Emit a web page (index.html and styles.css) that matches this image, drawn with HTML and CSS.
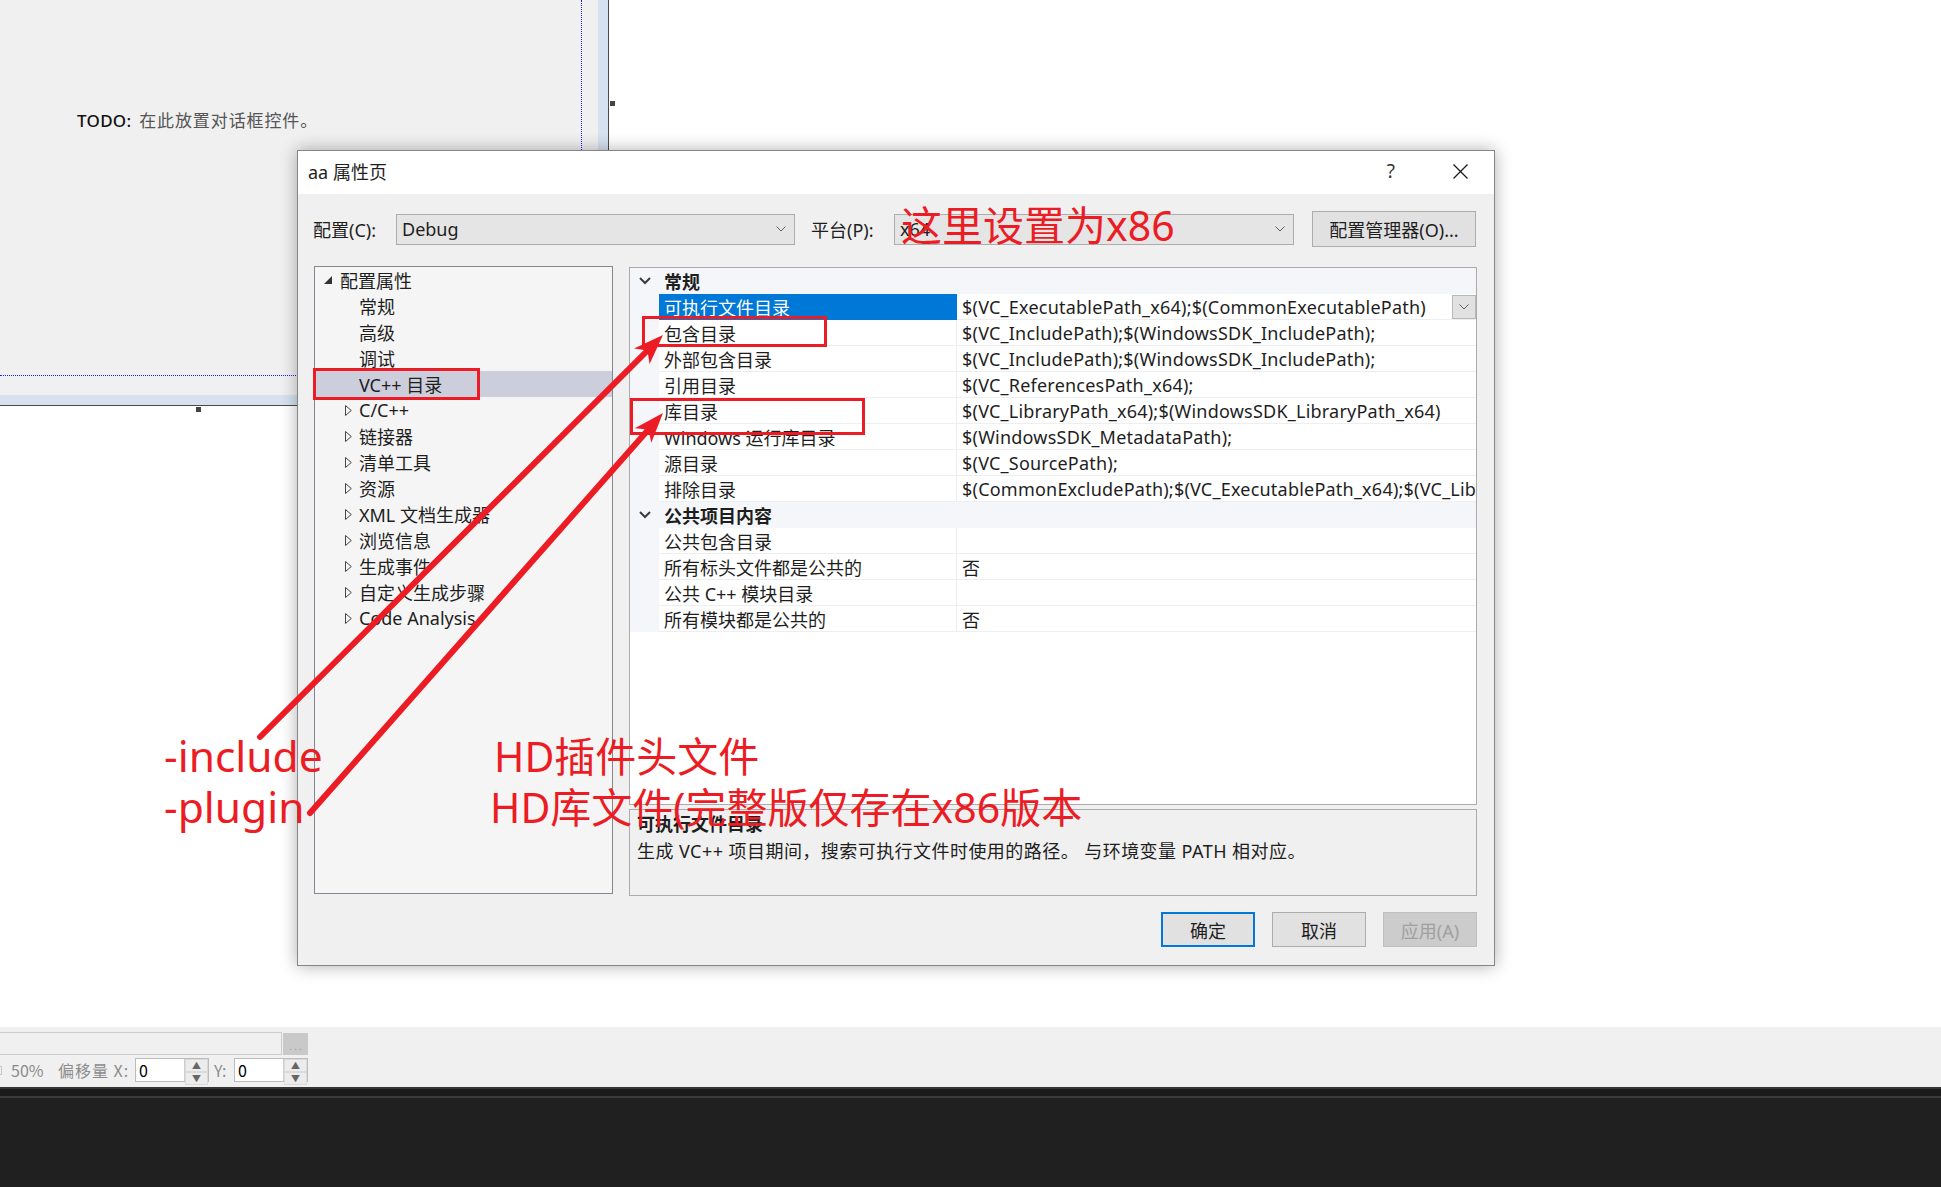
FILE: index.html
```html
<!DOCTYPE html>
<html lang="zh-CN">
<head>
    <meta charset="UTF-8">
    <title>aa 属性页</title>
    <link rel="stylesheet" href="styles.css">
</head>
<body>
  <div class="workspace">
    <div class="surface">
      <div class="form-area">
        <div class="margin-box">
          <p class="todo"><b>TODO:</b> 在此放置对话框控件。</p>
        </div>
      </div>
      <div class="band"></div>
      <div class="band"></div>
      <div class="band"></div>
    </div>
    <span class="handle handle-right"></span>
    <span class="handle handle-bottom"></span>

    <div class="dialog">
      <div class="titlebar">
        <span class="title">aa 属性页</span>
        <span class="help">?</span>
        <svg class="close" width="15" height="15" viewBox="0 0 15 15"><path d="M0.5 0.5 L14.5 14.5 M14.5 0.5 L0.5 14.5" stroke="#1a1a1a" stroke-width="1.3" fill="none"/></svg>
      </div>

      <div class="dlg-body">
        <div class="config-row">
          <span class="lbl">配置(C):</span>
          <div class="combo"><span>Debug</span><svg width="10" height="6" viewBox="0 0 10 6"><path d="M0.5 0.5 L5 5 L9.5 0.5" stroke="#606060" fill="none"/></svg></div>
          <span class="lbl lbl2">平台(P):</span>
          <div class="combo combo-wide"><span>x64</span><svg width="10" height="6" viewBox="0 0 10 6"><path d="M0.5 0.5 L5 5 L9.5 0.5" stroke="#606060" fill="none"/></svg></div>
          <button class="btn btn-manager">配置管理器(O)...</button>
        </div>

        <div class="main">
          <ul class="tree">
            <li class="root"><svg class="tw" width="8" height="8" viewBox="0 0 8 8"><path d="M8 0 L8 8 L0 8 Z" fill="#333"/></svg>配置属性</li>
            <li class="node">常规</li>
            <li class="node">高级</li>
            <li class="node">调试</li>
            <li class="node selected">VC++ 目录</li>
            <li class="node kids"><svg class="tw" width="7" height="11" viewBox="0 0 7 11"><path d="M0.5 0.5 L6.3 5.5 L0.5 10.5 Z" fill="none" stroke="#444"/></svg>C/C++</li>
            <li class="node kids"><svg class="tw" width="7" height="11" viewBox="0 0 7 11"><path d="M0.5 0.5 L6.3 5.5 L0.5 10.5 Z" fill="none" stroke="#444"/></svg>链接器</li>
            <li class="node kids"><svg class="tw" width="7" height="11" viewBox="0 0 7 11"><path d="M0.5 0.5 L6.3 5.5 L0.5 10.5 Z" fill="none" stroke="#444"/></svg>清单工具</li>
            <li class="node kids"><svg class="tw" width="7" height="11" viewBox="0 0 7 11"><path d="M0.5 0.5 L6.3 5.5 L0.5 10.5 Z" fill="none" stroke="#444"/></svg>资源</li>
            <li class="node kids"><svg class="tw" width="7" height="11" viewBox="0 0 7 11"><path d="M0.5 0.5 L6.3 5.5 L0.5 10.5 Z" fill="none" stroke="#444"/></svg>XML 文档生成器</li>
            <li class="node kids"><svg class="tw" width="7" height="11" viewBox="0 0 7 11"><path d="M0.5 0.5 L6.3 5.5 L0.5 10.5 Z" fill="none" stroke="#444"/></svg>浏览信息</li>
            <li class="node kids"><svg class="tw" width="7" height="11" viewBox="0 0 7 11"><path d="M0.5 0.5 L6.3 5.5 L0.5 10.5 Z" fill="none" stroke="#444"/></svg>生成事件</li>
            <li class="node kids"><svg class="tw" width="7" height="11" viewBox="0 0 7 11"><path d="M0.5 0.5 L6.3 5.5 L0.5 10.5 Z" fill="none" stroke="#444"/></svg>自定义生成步骤</li>
            <li class="node kids"><svg class="tw" width="7" height="11" viewBox="0 0 7 11"><path d="M0.5 0.5 L6.3 5.5 L0.5 10.5 Z" fill="none" stroke="#444"/></svg>Code Analysis</li>
          </ul>

          <div class="right-col">
            <div class="grid">
              <div class="row">
                <div class="gut"><svg width="12" height="8" viewBox="0 0 12 8"><path d="M1 1 L6 6 L11 1" stroke="#3c3c3c" stroke-width="2" fill="none"/></svg></div>
                <div class="cat">常规</div>
              </div>
              <div class="row sel">
                <div class="gut"></div>
                <div class="name">可执行文件目录</div>
                <div class="val"><span>$(VC_ExecutablePath_x64);$(CommonExecutablePath)</span>
                  <span class="drop"><svg width="10" height="6" viewBox="0 0 10 6"><path d="M0.5 0.5 L5 5 L9.5 0.5" stroke="#606060" fill="none"/></svg></span></div>
              </div>
              <div class="row"><div class="gut"></div><div class="name">包含目录</div><div class="val">$(VC_IncludePath);$(WindowsSDK_IncludePath);</div></div>
              <div class="row"><div class="gut"></div><div class="name">外部包含目录</div><div class="val">$(VC_IncludePath);$(WindowsSDK_IncludePath);</div></div>
              <div class="row"><div class="gut"></div><div class="name">引用目录</div><div class="val">$(VC_ReferencesPath_x64);</div></div>
              <div class="row"><div class="gut"></div><div class="name">库目录</div><div class="val">$(VC_LibraryPath_x64);$(WindowsSDK_LibraryPath_x64)</div></div>
              <div class="row"><div class="gut"></div><div class="name">Windows 运行库目录</div><div class="val">$(WindowsSDK_MetadataPath);</div></div>
              <div class="row"><div class="gut"></div><div class="name">源目录</div><div class="val">$(VC_SourcePath);</div></div>
              <div class="row"><div class="gut"></div><div class="name">排除目录</div><div class="val">$(CommonExcludePath);$(VC_ExecutablePath_x64);$(VC_LibraryPath_x64)</div></div>
              <div class="row">
                <div class="gut"><svg width="12" height="8" viewBox="0 0 12 8"><path d="M1 1 L6 6 L11 1" stroke="#3c3c3c" stroke-width="2" fill="none"/></svg></div>
                <div class="cat">公共项目内容</div>
              </div>
              <div class="row"><div class="gut"></div><div class="name">公共包含目录</div><div class="val"></div></div>
              <div class="row"><div class="gut"></div><div class="name">所有标头文件都是公共的</div><div class="val">否</div></div>
              <div class="row"><div class="gut"></div><div class="name">公共 C++ 模块目录</div><div class="val"></div></div>
              <div class="row"><div class="gut"></div><div class="name">所有模块都是公共的</div><div class="val">否</div></div>
            </div>
            <div class="desc">
              <div class="desc-title">可执行文件目录</div>
              <div class="desc-text">生成 VC++ 项目期间，搜索可执行文件时使用的路径。 与环境变量 PATH 相对应。</div>
            </div>
          </div>
        </div>

        <div class="actions">
          <button class="btn btn-primary">确定</button>
          <button class="btn">取消</button>
          <button class="btn btn-disabled">应用(A)</button>
        </div>
      </div>
    </div>
  </div>

  <div class="statusbar">
    <div class="sb-row">
      <div class="sb-field"></div>
      <div class="sb-more">. . .</div>
    </div>
    <div class="sb-row sb-row2">
      <span class="sb-check"></span>
      <span class="sb-zoom">50%</span>
      <span class="sb-offset">偏移量 X:</span>
      <div class="spin"><span class="spin-val">0</span><span class="spin-btns"><i>▲</i><i>▼</i></span></div>
      <span class="sb-y">Y:</span>
      <div class="spin"><span class="spin-val">0</span><span class="spin-btns"><i>▲</i><i>▼</i></span></div>
    </div>
  </div>
  <div class="dock"><div class="dock-tab"></div></div>

  <svg class="marks" viewBox="0 0 1941 1187">
    <rect class="mark-box" x="314.5" y="369.5" width="164" height="29"/>
    <rect class="mark-box" x="643.5" y="317.5" width="182" height="28"/>
    <rect class="mark-box" x="631.5" y="399.5" width="232" height="34"/>
    <path class="mark-line" d="M260 737 L647 351"/>
    <path class="mark-head" d="M663 335 L649.6 364 L647.4 350.5 L634 348.4 Z"/>
    <path class="mark-line" d="M310 813 L648 430"/>
    <path class="mark-head" d="M663 413 L651.3 442.8 L648.4 429.5 L634.8 428.2 Z"/>
    <text class="mark-text" x="901" y="241">这里设置为x86</text>
    <text class="mark-text mark-latin" x="164" y="772">-include</text>
    <text class="mark-text mark-latin" x="164" y="823">-plugin</text>
    <text class="mark-text" x="494" y="772">HD插件头文件</text>
    <text class="mark-text" x="490" y="823">HD库文件(完整版仅存在x86版本</text>
  </svg>
</body>
</html>
```

FILE: styles.css
```css
* {
  box-sizing: border-box;
}

body {
  margin: 0;
  width: 1941px;
  height: 1187px;
  overflow: hidden;
  position: relative;
  display: flex;
  flex-direction: column;
  background: #fff;
  color: #1e1e1e;
  font-family: "Noto Sans", "Noto Sans CJK SC", sans-serif;
  font-size: 18px;
}

/* editor canvas behind the dialog */
.workspace {
  position: relative;
  flex: none;
  height: 1027px;
  background: #fff;
}

.surface {
  display: grid;
  grid-template-columns: 598px 10px;
  grid-template-rows: 395px 10px;
  width: 609px;
  height: 406px;
  border-right: 1px solid #4a4a4a;
  border-bottom: 1px solid #4a4a4a;
  background: #f0f0f0;
}

.margin-box {
  width: 582px;
  height: 376px;
  border-right: 1px dotted #1c1cff;
  border-bottom: 1px dotted #1c1cff;
  padding: 108px 0 0 77px;
}

.todo {
  margin: 0;
  font-family: "Noto Sans CJK SC", sans-serif;
  font-size: 17px;
  line-height: 24px;
  letter-spacing: 0.9px;
  color: #555;
}

.todo b {
  font-family: "Noto Sans", sans-serif;
  font-weight: 500;
  letter-spacing: 0.3px;
  margin-right: 3px;
  color: #111;
}

.band {
  background: #d6e2f0;
}

.handle {
  position: absolute;
  width: 5px;
  height: 5px;
  background: #444;
}

.handle-right {
  left: 610px;
  top: 101px;
}

.handle-bottom {
  left: 196px;
  top: 407px;
}

/* property dialog window */
.dialog {
  position: absolute;
  left: 297px;
  top: 150px;
  width: 1198px;
  height: 816px;
  border: 1px solid #868686;
  background: #f0f0f0;
  box-shadow: 0 0 16px rgba(0, 0, 0, 0.32);
}

.titlebar {
  display: flex;
  align-items: center;
  height: 43px;
  padding: 0 26px 3px 10px;
  background: #fff;
}

.title {
  flex: 1;
}

.help {
  margin-right: 58px;
  color: #333;
  font-size: 19px;
}

.dlg-body {
  padding: 17px 17px 0 16px;
}

.config-row {
  display: flex;
  align-items: center;
  height: 36px;
}

.lbl {
  flex: none;
  width: 82px;
  margin-left: -1px;
  margin-right: 1px;
}

.lbl2 {
  margin-left: 16px;
}

.combo {
  flex: none;
  display: flex;
  align-items: center;
  justify-content: space-between;
  width: 399px;
  height: 31px;
  padding: 0 8px 0 5px;
  border: 1px solid #adadad;
  background: #e5e5e5;
}

.combo-wide {
  width: 400px;
}

.btn {
  padding: 0;
  font: inherit;
  color: #1e1e1e;
  background: #e1e1e1;
  border: 1px solid #adadad;
}

.btn-manager {
  width: 164px;
  height: 36px;
  margin-left: 18px;
}

.main {
  display: flex;
  gap: 16px;
  height: 630px;
  margin-top: 19px;
}

.tree {
  flex: none;
  width: 299px;
  height: 628px;
  margin: 0;
  padding: 0;
  list-style: none;
  border: 1px solid #828790;
  background: #f5f5f5;
}

.tree li {
  display: flex;
  align-items: center;
  height: 26px;
  white-space: nowrap;
}

.tree .root {
  padding-left: 9px;
}

.root .tw {
  margin-right: 8px;
}

.tree .node {
  padding-left: 44px;
}

.tree .kids {
  padding-left: 30px;
}

.kids .tw {
  margin-right: 7px;
}

.tree .selected {
  background: #cccedb;
}

.right-col {
  display: flex;
  flex-direction: column;
  gap: 4px;
  width: 848px;
}

.grid {
  height: 538px;
  margin-top: 1px;
  border: 1px solid #ababab;
  background: #fff;
}

.row {
  display: flex;
  height: 26px;
}

.gut {
  flex: none;
  display: flex;
  align-items: center;
  justify-content: center;
  width: 29px;
  background: #f4f6f9;
}

.cat {
  flex: 1;
  display: flex;
  align-items: center;
  padding-left: 5px;
  font-weight: 700;
  background: #f4f6f9;
}

.name,
.val {
  display: flex;
  align-items: center;
  white-space: nowrap;
  overflow: hidden;
  border-bottom: 1px solid #eceef2;
}

.name {
  flex: none;
  width: 298px;
  padding-left: 5px;
  border-right: 1px solid #eceef2;
}

.val {
  flex: 1;
  padding-left: 5px;
  letter-spacing: 0.22px;
}

.sel .name {
  background: #0078d7;
  border-color: #0078d7;
  color: #fff;
}

.drop {
  display: flex;
  align-items: center;
  justify-content: center;
  flex: none;
  width: 24px;
  height: 24px;
  margin-left: auto;
  border: 1px solid #b8b8b8;
  background: #e1e1e1;
}

.desc {
  height: 87px;
  padding: 1px 7px;
  line-height: 27px;
  border: 1px solid #ababab;
  background: #f0f0f0;
}

.desc-title {
  font-weight: 700;
}

.desc-text {
  letter-spacing: 0.45px;
}

.actions {
  display: flex;
  justify-content: flex-end;
  gap: 17px;
  margin-top: 16px;
}

.actions .btn {
  width: 94px;
  height: 35px;
}

.actions .btn-primary {
  border: 2px solid #0078d7;
}

.actions .btn-disabled {
  background: #cccccc;
  border-color: #bfbfbf;
  color: #a0a0a0;
}

/* bottom tool strip */
.statusbar {
  flex: none;
  height: 60px;
  padding-top: 5px;
  background: #f0f0f0;
  color: #8c8c8c;
  font-family: "Noto Sans CJK SC", sans-serif;
  font-size: 16px;
}

.sb-row {
  display: flex;
  align-items: center;
}

.sb-field {
  width: 284px;
  height: 23px;
  margin-left: -2px;
  border: 1px solid #cdcdcd;
  background: #f0f0f0;
}

.sb-more {
  width: 25px;
  height: 22px;
  margin-left: 1px;
  background: #c9c9c9;
  color: #8aa0b8;
  font-size: 10px;
  line-height: 26px;
  text-align: center;
}

.sb-row2 {
  height: 24px;
  margin-top: 3px;
}

.sb-check {
  width: 4px;
  height: 9px;
  margin-left: -2px;
  margin-right: 9px;
  border: 1px solid #c8c8c8;
}

.sb-zoom {
  width: 47px;
}

.sb-offset {
  width: 77px;
  letter-spacing: 1px;
}

.sb-y {
  width: 25px;
  padding-left: 5px;
}

.spin {
  display: flex;
  width: 74px;
  height: 24px;
  border: 1px solid #bcbcbc;
  background: #fff;
}

.spin-val {
  flex: 1;
  padding-left: 3px;
  color: #000;
  line-height: 22px;
}

.spin-btns {
  display: flex;
  flex-direction: column;
  width: 24px;
  border-left: 1px solid #cfcfcf;
}

.spin-btns i {
  flex: 1;
  font-style: normal;
  font-size: 9px;
  line-height: 11px;
  text-align: center;
  color: #666;
  background: #ececec;
  border: 1px solid #dadada;
}

.dock {
  flex: 1;
  background: #202020;
  border-top: 2px solid #343434;
}

.dock-tab {
  height: 9px;
  background: #1b1b1b;
  border-bottom: 2px solid #3a3a3a;
}

/* red annotations drawn on top of the screenshot */
.marks {
  position: absolute;
  left: 0;
  top: 0;
  width: 1941px;
  height: 1187px;
  pointer-events: none;
}

.mark-box {
  fill: none;
  stroke: #ec1c24;
  stroke-width: 3;
}

.mark-line {
  fill: none;
  stroke: #ec1c24;
  stroke-width: 6;
  stroke-linecap: round;
}

.mark-head {
  fill: #ec1c24;
}

.mark-text {
  fill: #ec1c24;
  font-family: "Noto Sans", "Noto Sans CJK SC", sans-serif;
  font-size: 41px;
}

.mark-latin {
  font-size: 42.5px;
}
```
